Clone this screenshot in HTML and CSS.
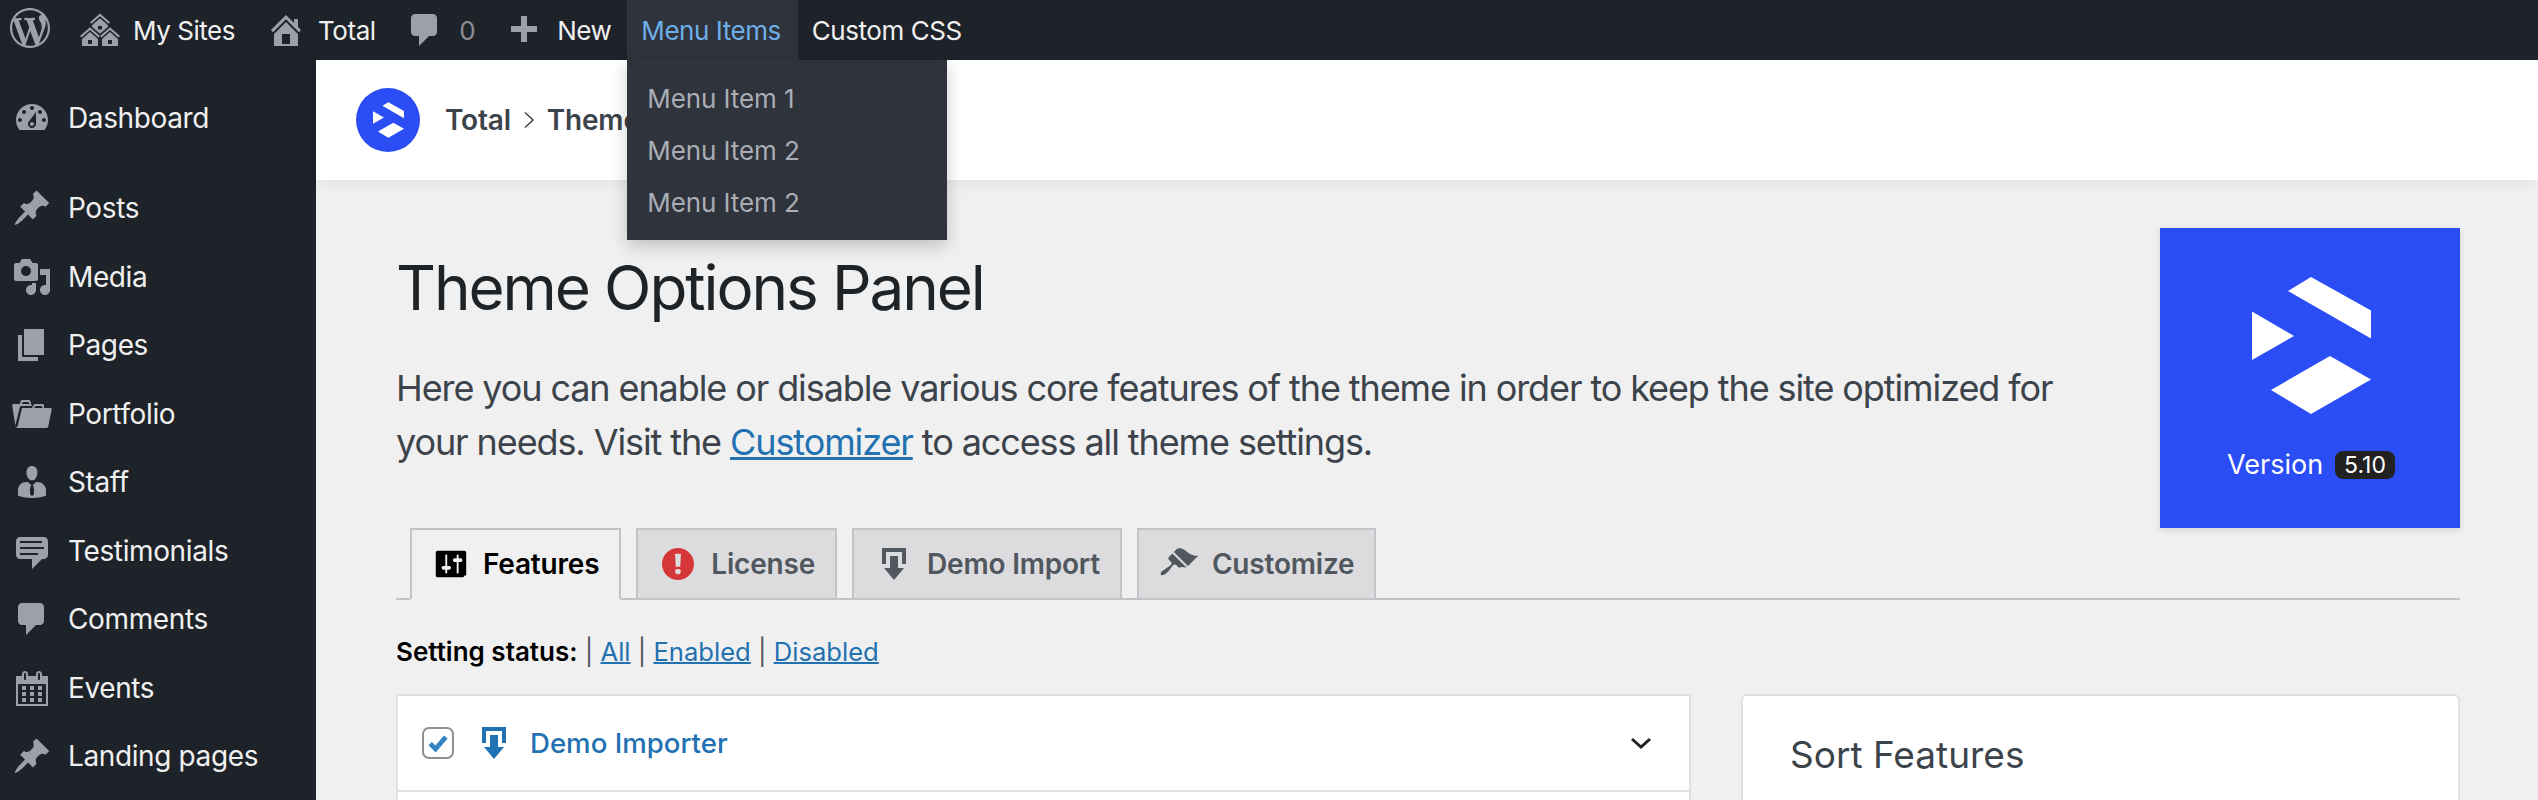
FILE: index.html
```html
<!DOCTYPE html>
<html lang="en">
<head>
<meta charset="utf-8">
<title>Theme Options Panel</title>
<link rel="stylesheet" href="styles.css">
</head>
<body>
<header class="adminbar">
  <a class="bar-item logo-item"><svg class="ic" viewBox="0 0 20 20"><path d="M20 10c0-5.51-4.49-10-10-10C4.48 0 0 4.49 0 10c0 5.52 4.48 10 10 10 5.51 0 10-4.48 10-10zM7.78 15.37L4.37 6.22c.55-.02 1.17-.08 1.17-.08.5-.06.44-1.13-.06-1.11 0 0-1.45.11-2.37.11-.18 0-.37 0-.58-.01C4.12 2.69 6.87 1.11 10 1.11c2.33 0 4.45.87 6.05 2.34-.68-.11-1.65.39-1.65 1.58 0 .74.45 1.36.9 2.1.35.61.55 1.36.55 2.46 0 1.49-1.4 5-1.4 5l-3.03-8.37c.54-.02.82-.17.82-.17.5-.05.44-1.25-.06-1.22 0 0-1.44.12-2.38.12-.87 0-2.33-.12-2.33-.12-.5-.03-.56 1.2-.06 1.22l.92.08 1.26 3.41zM17.41 10c.24-.64.74-1.87.43-4.25.7 1.29 1.05 2.71 1.05 4.25 0 3.29-1.73 6.24-4.4 7.78.97-2.59 1.94-5.2 2.92-7.78zM6.1 18.09C3.12 16.65 1.11 13.53 1.11 10c0-1.3.23-2.48.72-3.59C3.25 10.3 4.67 14.2 6.1 18.09zm4.03-6.63l2.58 6.98c-.86.29-1.76.45-2.71.45-.79 0-1.57-.11-2.29-.33.81-2.38 1.62-4.74 2.42-7.1z"/></svg></a>
  <a class="bar-item sites-item"><svg class="ic" viewBox="0 0 20 20"><path d="M14.27 6.87L10 3.14 5.73 6.87 5 6.14l5-4.38 5 4.38zM14 8.42l-4.05 3.43L6 8.38v-.74l4-3.5 4 3.5v.78zM11 9.7V8H9v1.7h2zm-1.73 4.03L5 10 .73 13.73 0 13l5-4.38L10 13zm10 0L15 10l-4.27 3.73L10 13l5-4.38L20 13zM5 11l4 3.5V18H1v-3.5zm10 0l4 3.5V18h-8v-3.5zM6 17v-2H4v2h2zm10 0v-2h-2v2h2z"/></svg><span>My Sites</span></a>
  <a class="bar-item home-item"><svg class="ic" viewBox="0 0 20 20"><path d="M16 8.5l1.53 1.53-1.06 1.06L10 4.62l-6.47 6.47-1.06-1.06L10 2.5l4 4v-2h2v4zm-6-2.46l6 5.99V18H4v-5.97zM12 17v-5H8v5h4z"/></svg><span>Total</span></a>
  <a class="bar-item comment-item"><svg class="ic" viewBox="0 0 20 20"><path d="M5 2h9c1.1 0 2 .9 2 2v7c0 1.1-.9 2-2 2h-2l-5 5v-5H5c-1.100 0-2-.9-2-2V4c0-1.1.9-2 2-2z"/></svg><span class="muted">0</span></a>
  <a class="bar-item new-item"><svg class="ic plus" viewBox="0 0 20 20"><path d="M17 7v3h-5v5H9v-5H4V7h5V2h3v5h5z"/></svg><span>New</span></a>
  <div class="bar-item menu-open">
    <span>Menu Items</span>
    <ul class="dropdown">
      <li>Menu Item 1</li>
      <li>Menu Item 2</li>
      <li>Menu Item 2</li>
    </ul>
  </div>
  <a class="bar-item"><span>Custom CSS</span></a>
</header>

<div class="layout">
  <nav class="sidebar">
    <a class="nav-item nav-first"><svg class="ic" viewBox="0 0 20 20"><path d="M3.76 16h12.48c1.1-1.37 1.760-3.11 1.760-5 0-4.420-3.580-8-8-8s-8 3.580-8 8c0 1.890.66 3.630 1.760 5zM10 4c.55 0 1 .45 1 1s-.45 1-1 1-1-.45-1-1 .45-1 1-1zM6 6c.55 0 1 .45 1 1s-.45 1-1 1-1-.45-1-1 .45-1 1-1zm8 0c.55 0 1 .45 1 1s-.45 1-1 1-1-.45-1-1 .45-1 1-1zm-5.370 5.550L12 7v6c0 1.100-.9 2-2 2s-2-.9-2-2c0-.57.24-1.080.63-1.450zM4 10c.55 0 1 .45 1 1s-.45 1-1 1-1-.45-1-1 .45-1 1-1zm12 0c.55 0 1 .45 1 1s-.45 1-1 1-1-.45-1-1 .45-1 1-1zm-5 3c0-.55-.45-1-1-1s-1 .45-1 1 .45 1 1 1 1-.45 1-1z"/></svg><span>Dashboard</span></a>
    <a class="nav-item"><svg class="ic" viewBox="0 0 20 20"><path d="M10.44 3.020l1.820-1.820 6.360 6.350-1.830 1.820c-1.050-.68-2.480-.57-3.410.36l-.75.75c-.92.93-1.040 2.350-.35 3.410l-1.830 1.820-2.410-2.410-2.800 2.790c-.42.42-3.380 2.710-3.800 2.290s1.860-3.390 2.280-3.810l2.790-2.790L4.100 9.360l1.830-1.820c1.050.69 2.480.57 3.400-.36l.75-.75c.93-.92 1.050-2.350.36-3.410z"/></svg><span>Posts</span></a>
    <a class="nav-item"><svg class="ic" viewBox="0 0 20 20"><path d="M13 11V4c0-.55-.45-1-1-1h-1.670L9 1H5L3.670 3H2c-.55 0-1 .45-1 1v7c0 .55.45 1 1 1h10c.55 0 1-.45 1-1zM7 4.500c1.380 0 2.500 1.120 2.500 2.500S8.380 9.500 7 9.500 4.500 8.380 4.500 7 5.620 4.500 7 4.500zM14 6h5v10.500c0 1.380-1.120 2.500-2.500 2.500S14 17.880 14 16.500s1.120-2.500 2.500-2.500c.17 0 .34.02.5.05V9h-3V6zm-4 8.050V13h2v3.500c0 1.380-1.120 2.500-2.500 2.500S7 17.880 7 16.500 8.120 14 9.500 14c.17 0 .34.02.5.05z"/></svg><span>Media</span></a>
    <a class="nav-item"><svg class="ic" viewBox="0 0 20 20"><path d="M6 15V2h10v13H6zm-1 1h8v2H3V5h2v11z"/></svg><span>Pages</span></a>
    <a class="nav-item"><svg class="ic" viewBox="0 0 20 20"><path d="M4 5H.78c-.37 0-.74.32-.69.84l1.560 9.990S3.500 8.470 3.860 6.700c.11-.53.61-.7.98-.7H10s-.7-2.080-.77-2.310C9.110 3.250 8.890 3 8.450 3H5.140c-.36 0-.7.23-.8.64C4.250 4.040 4 5 4 5zm4.880 0h-4s.42-1 .87-1h2.130c.48 0 1 1 1 1zM2.670 16.250c-.31.47-.76.75-1.260.75h15.730c.54 0 .92-.31 1.030-.83.44-2.190 1.680-8.440 1.680-8.440.07-.5-.3-.73-.62-.73H16V5.530c0-.16-.26-.53-.66-.53h-3.760c-.52 0-.87.58-.87.58L10 7H5.590c-.32 0-.63.19-.69.5 0 0-1.590 6.700-1.720 7.330-.07.37-.22.99-.51 1.420zM15.380 7H11s.58-1 1.130-1h2.290c.71 0 .96 1 .96 1z"/></svg><span>Portfolio</span></a>
    <a class="nav-item"><svg class="ic" viewBox="0 0 20 20"><path d="M7.300 6l-.03-.19c-.04-.37-.05-.73-.03-1.080.02-.36.1-.71.25-1.040.14-.32.31-.61.52-.86s.49-.46.83-.6c.34-.15.72-.23 1.130-.23.69 0 1.260.2 1.710.59s.76.87.91 1.440.18 1.160.09 1.780l-.03.19c-.01.09-.05.25-.11.48-.05.24-.12.47-.2.69-.08.21-.19.45-.34.72-.14.27-.3.49-.47.69-.18.19-.4.34-.67.48-.27.13-.55.19-.86.19s-.59-.06-.87-.19c-.26-.13-.49-.29-.67-.5-.18-.2-.34-.42-.49-.66-.15-.25-.26-.49-.34-.73-.09-.25-.16-.47-.21-.67-.06-.21-.1-.37-.12-.5zm9.200 6.240c.41.7.5 1.410.5 2.140v2.490c0 .03-.12.08-.29.13-.18.04-.42.13-.97.27-.55.12-1.100.24-1.650.34s-1.190.19-1.950.27c-.75.08-1.460.12-2.130.12-.68 0-1.390-.04-2.140-.12-.75-.07-1.400-.17-1.980-.27-.58-.11-1.080-.23-1.560-.34-.49-.11-.8-.21-1.060-.29L3 16.870v-2.490c0-.75.07-1.460.46-2.150s.81-1.250 1.500-1.680C5.660 10.120 7.190 10 8 10l1.670 1.670L9 13v3l1.020 1.080L11 16v-3l-.68-1.330L11.970 10c.77 0 2.200.07 2.900.52.71.45 1.210 1.020 1.630 1.720z"/></svg><span>Staff</span></a>
    <a class="nav-item"><svg class="ic" viewBox="0 0 20 20"><path d="M4 3h12c.55 0 1.020.2 1.410.59S18 4.450 18 5v7c0 .55-.2 1.020-.59 1.410S16.550 14 16 14h-1l-5 5v-5H4c-.55 0-1.020-.2-1.410-.59S2 12.550 2 12V5c0-.55.2-1.020.59-1.410S3.450 3 4 3zm11 2H4v1h11V5zm1 3H4v1h12V8zm-3 3H4v1h9v-1z"/></svg><span>Testimonials</span></a>
    <a class="nav-item"><svg class="ic" viewBox="0 0 20 20"><path d="M5 2h9c1.100 0 2 .9 2 2v7c0 1.100-.9 2-2 2h-2l-5 5v-5H5c-1.100 0-2-.9-2-2V4c0-1.100.9-2 2-2z"/></svg><span>Comments</span></a>
    <a class="nav-item"><svg class="ic" viewBox="0 0 20 20"><path d="M15 4h3v15H2V4h3V3c0-.41.15-.76.44-1.060.29-.29.65-.44 1.060-.44s.77.15 1.060.44c.29.3.44.65.44 1.060v1h4V3c0-.41.15-.76.44-1.060.29-.29.65-.44 1.060-.44s.77.15 1.060.44c.29.3.44.65.44 1.060v1zM6 3v2.500c0 .14.05.26.15.36.09.09.21.14.35.14s.26-.05.35-.14c.1-.1.15-.22.15-.36V3c0-.14-.05-.26-.15-.35-.09-.1-.21-.15-.35-.15s-.26.05-.35.15c-.1.09-.15.21-.15.35zm7 0v2.500c0 .14.05.26.14.36.1.09.22.14.36.14s.26-.05.36-.14c.09-.1.14-.22.14-.36V3c0-.14-.05-.26-.14-.35-.1-.1-.22-.15-.36-.15s-.26.05-.36.15c-.09.09-.14.21-.14.35zm4 15V8H3v10h14zM7 9v2H5V9h2zm2 0h2v2H9V9zm4 2V9h2v2h-2zm-6 1v2H5v-2h2zm2 0h2v2H9v-2zm4 2v-2h2v2h-2zm-6 1v2H5v-2h2zm4 2H9v-2h2v2zm4 0h-2v-2h2v2z"/></svg><span>Events</span></a>
    <a class="nav-item"><svg class="ic" viewBox="0 0 20 20"><path d="M10.44 3.020l1.820-1.820 6.360 6.350-1.830 1.820c-1.050-.68-2.480-.57-3.410.36l-.75.75c-.92.93-1.040 2.350-.35 3.410l-1.830 1.820-2.410-2.410-2.800 2.790c-.42.42-3.380 2.710-3.800 2.290s1.860-3.390 2.280-3.810l2.790-2.790L4.100 9.360l1.830-1.820c1.050.69 2.480.57 3.400-.36l.75-.75c.93-.92 1.050-2.350.36-3.410z"/></svg><span>Landing pages</span></a>
  </nav>

  <main class="content">
    <div class="topbar">
      <span class="brand-dot"><svg class="brand-mark" viewBox="0 0 119 137"><path d="M36 14L59 0l60 33.500V61.500zM0 34.500L42 59 0 83zM19 113L78 79l41 23.500L59 137z"/></svg></span>
      <span class="crumb">Total</span>
      <svg class="crumb-sep" viewBox="0 0 12 20"><path d="M2 2.500l8 7.500-8 7.500"/></svg>
      <span class="crumb">Theme Options</span>
    </div>
    <div class="page">
      <div class="intro">
        <div class="intro-text">
          <h1>Theme Options Panel</h1>
          <p>Here you can enable or disable various core features of the theme in order to keep the site optimized for your needs. Visit the <a href="#">Customizer</a> to access all theme settings.</p>
        </div>
        <div class="version-card">
          <svg class="version-mark" viewBox="0 0 119 137"><path d="M36 14L59 0l60 33.500V61.500zM0 34.500L42 59 0 83zM19 113L78 79l41 23.500L59 137z"/></svg>
          <div class="version-line"><span>Version</span><span class="badge">5.10</span></div>
        </div>
      </div>

      <div class="tabs">
        <a class="tab tab-active"><svg class="tab-ic tab-ic-small" viewBox="0 0 20 20"><path d="M18 16V4c0-.55-.45-1-1-1H3c-.55 0-1 .45-1 1v12c0 .55.45 1 1 1h13c.55 0 1-.45 1-1zM8 11h1c.55 0 1 .45 1 1s-.45 1-1 1H8v1.500c0 .28-.22.5-.5.5s-.5-.22-.5-.5V13H6c-.55 0-1-.45-1-1s.45-1 1-1h1V5.500c0-.28.22-.5.5-.5s.5.22.5.5V11zm5-2h-1c-.55 0-1-.45-1-1s.45-1 1-1h1V5.500c0-.28.22-.5.5-.5s.5.22.5.5V7h1c.55 0 1 .45 1 1s-.45 1-1 1h-1v5.500c0 .28-.22.5-.5.5s-.5-.22-.5-.5V9z"/></svg><span>Features</span></a>
        <a class="tab"><svg class="tab-ic tab-warn" viewBox="0 0 20 20"><path d="M10 2c4.420 0 8 3.580 8 8s-3.580 8-8 8-8-3.580-8-8 3.580-8 8-8zm1.130 9.380l.35-6.460H8.520l.35 6.460h2.260zm-.09 3.360c.24-.23.37-.55.37-.96 0-.42-.12-.74-.36-.97s-.59-.35-1.060-.35-.82.12-1.070.35-.37.55-.37.97c0 .41.13.73.38.96.26.23.61.34 1.060.34s.8-.11 1.050-.34z"/></svg><span>License</span></a>
        <a class="tab"><svg class="tab-ic" viewBox="0 0 20 20"><path d="M14.010 4v6h2V2H4v8h2.010V4h8zm-2 2v6h3l-5 6-5-6h3V6h4z"/></svg><span>Demo Import</span></a>
        <a class="tab"><svg class="tab-ic" viewBox="0 0 20 20"><path d="M14.48 11.06L7.41 3.99l1.5-1.5c.5-.56 2.3-.47 3.51.32 1.21.8 1.43 1.28 2.91 2.1 1.18.64 2.45 1.26 4.45.85zm-.71.71L6.7 4.7 4.93 6.47c-.39.39-.39 1.02 0 1.41l1.06 1.06c.39.39.39 1.03 0 1.42-.6.6-1.43 1.11-2.21 1.69-.35.26-.7.53-1.01.84C1.43 13.23.4 14.85 1.02 15.47s2.24-.41 3.58-1.76c.31-.31.58-.66.85-1.02.57-.78 1.08-1.61 1.69-2.21.39-.39 1.02-.39 1.41 0l1.06 1.06c.39.39 1.02.39 1.41 0z"/></svg><span>Customize</span></a>
      </div>

      <p class="status"><strong>Setting status:</strong> | <a href="#">All</a> | <a href="#">Enabled</a> | <a href="#">Disabled</a></p>

      <div class="panels">
        <section class="features">
          <div class="feature-row">
            <span class="checkbox"><svg viewBox="0 0 20 20"><path d="M3.500 10.500l4.500 4.500 8.500-10" /></svg></span>
            <svg class="feature-ic" viewBox="0 0 20 20"><path d="M14.010 4v6h2V2H4v8h2.010V4h8zm-2 2v6h3l-5 6-5-6h3V6h4z"/></svg>
            <a class="feature-name">Demo Importer</a>
            <svg class="chevron" viewBox="0 0 24 12"><path d="M3 2l9 8 9-8"/></svg>
          </div>
        </section>
        <aside class="sort-card">
          <h2>Sort Features</h2>
        </aside>
      </div>
    </div>
  </main>
</div>
</body>
</html>
```

FILE: styles.css
```css
* { box-sizing: border-box; }
html, body { margin: 0; height: 800px; overflow: hidden; }
body {
  font-family: Inter, "Liberation Sans", sans-serif;
  background: #f0f0f1;
  color: #3c434a;
  display: flex;
  flex-direction: column;
}
a { text-decoration: none; }
ul { list-style: none; margin: 0; padding: 0; }
.ic { width: 40px; height: 40px; fill: #9ca1a7; flex: none; }

.adminbar {
  height: 60px;
  flex: none;
  background: #1e2329;
  display: flex;
  align-items: stretch;
  color: #f0f0f1;
  font-size: 26px;
  letter-spacing: -0.45px;
  position: relative;
  z-index: 5;
}
.bar-item {
  display: flex;
  align-items: center;
  gap: 13px;
  padding: 0 14px;
  position: relative;
}
.logo-item { padding: 0 16px 4px 10px; }
.home-item { gap: 12px; padding-left: 17px; }
.comment-item { gap: 14px; padding-left: 15.5px; }
.muted { color: #8c8f94; }
.plus { margin-top: 4px; }
.new-item { gap: 14px; padding-left: 14px; }
.menu-open { background: #2f333b; color: #6eaee8; margin-left: 2px; padding-right: 17px; }
.dropdown {
  position: absolute;
  left: 0;
  top: 60px;
  width: 320px;
  height: 180px;
  padding: 13px 20px;
  background: #2f333b;
  color: #a9adb5;
  font-size: 26px;
  letter-spacing: -0.1px;
  box-shadow: 0 6px 16px rgba(0,0,0,.2);
}
.dropdown li { height: 52px; line-height: 52px; }

.layout { flex: 1; display: flex; min-height: 0; overflow: hidden; }
.sidebar {
  width: 316px;
  flex: none;
  background: #1e2329;
  padding-top: 24px;
  display: flex;
  flex-direction: column;
  color: #f0f0f1;
  font-size: 28px;
  letter-spacing: -0.38px;
}
.nav-item {
  height: 68.5px;
  flex: none;
  display: flex;
  align-items: center;
  gap: 16px;
  padding-left: 12px;
}
.nav-first { margin-bottom: 21.5px; }

.content { flex: 1; min-width: 0; }
.topbar {
  height: 120px;
  background: #fff;
  display: flex;
  align-items: center;
  padding-left: 40px;
  box-shadow: 0 4px 14px rgba(0,0,0,.05);
  position: relative;
}
.brand-dot {
  width: 64px;
  height: 64px;
  border-radius: 50%;
  background: #2b4df5;
  display: flex;
  align-items: center;
  justify-content: center;
  margin-right: 25px;
}
.brand-mark { width: 31px; height: 36px; fill: #fff; }
.crumb { font-size: 28px; font-weight: 600; color: #3c434a; letter-spacing: -0.2px; }
.crumb-sep { width: 12px; height: 20px; margin: 0 12px; fill: none; stroke: #3c434a; stroke-width: 1.5; }

.page { padding: 0 78px 0 80px; }
.intro { display: flex; justify-content: space-between; }
.intro-text { width: 1700px; }
.intro-text h1 {
  margin: 69px 0 0;
  font-size: 62px;
  line-height: 78px;
  font-weight: 400;
  letter-spacing: -2.1px;
  color: #1d2327;
}
.intro-text p {
  margin: 34px 0 0;
  font-size: 36px;
  line-height: 54px;
  letter-spacing: -1.1px;
  color: #3c434a;
}
.intro-text p a, .status a { color: #2271b1; text-decoration: underline; }
.status a { text-decoration-thickness: 2px; }
.version-card {
  width: 300px;
  height: 300px;
  margin-top: 48px;
  flex: none;
  background: #2b4df5;
  color: #fff;
  box-shadow: 0 2px 6px rgba(0,0,0,.12);
  display: flex;
  flex-direction: column;
  align-items: center;
  padding: 49px 0 0 2px;
}
.version-mark { width: 119px; height: 137px; fill: #fff; }
.version-line {
  margin-top: 34px;
  display: flex;
  align-items: center;
  gap: 12px;
  font-size: 27px;
}
.badge {
  background: #222;
  border-radius: 8px;
  height: 28px;
  line-height: 28px;
  padding: 0 9px;
  font-size: 23px;
}

.tabs {
  height: 72px;
  display: flex;
  gap: 15px;
  padding-left: 14px;
  border-bottom: 2px solid #c3c4c7;
}
.tab {
  height: 72px;
  display: flex;
  align-items: center;
  gap: 13px;
  padding: 0 20px;
  background: #dcdcde;
  border: 2px solid #c3c4c7;
  color: #50575e;
  font-size: 28px;
  font-weight: 600;
  letter-spacing: -0.2px;
}
.tab-active { background: #f0f0f1; border-bottom-color: #f0f0f1; color: #000; position: relative; z-index: 1; }
.tab-ic { width: 40px; height: 40px; fill: currentColor; flex: none; }
.tab-ic-small { width: 38px; height: 40px; }
.tab-warn { fill: #d63638; }

.status { margin: 36px 0 0; font-size: 25.6px; line-height: 32px; color: #50575e; }
.status strong { color: #000; font-weight: 600; font-size: 26px; }

.panels { margin-top: 26px; display: flex; gap: 50px; align-items: stretch; height: 107px; }
.features {
  width: 1295px;
  background: #fff;
  border: 2px solid #e0e0e0;
  border-bottom: 0;
}
.feature-row {
  height: 96px;
  display: flex;
  align-items: center;
  padding: 0 36px 0 24px;
  border-bottom: 2px solid #e0e0e0;
}
.checkbox {
  width: 32px;
  height: 32px;
  border: 2px solid #8c8f94;
  border-radius: 7px;
  background: #fff;
  flex: none;
  display: flex;
  align-items: center;
  justify-content: center;
}
.checkbox svg { width: 24px; height: 24px; fill: none; stroke: #3582c4; stroke-width: 4; }
.feature-ic { width: 40px; height: 40px; fill: #2271b1; margin-left: 20px; flex: none; }
.feature-name { margin-left: 16px; font-size: 27.6px; font-weight: 500; color: #2271b1; }
.chevron { width: 24px; height: 12px; margin-left: auto; fill: none; stroke: #1d2327; stroke-width: 3; }
.sort-card {
  flex: 1;
  background: #fff;
  border: 2px solid #e0e0e0;
  border-bottom: 0;
  border-radius: 6px 6px 0 0;
  padding: 37px 47px 0;
}
.sort-card h2 { margin: 0; font-size: 37px; line-height: 44px; font-weight: 400; color: #3c434a; }
```
